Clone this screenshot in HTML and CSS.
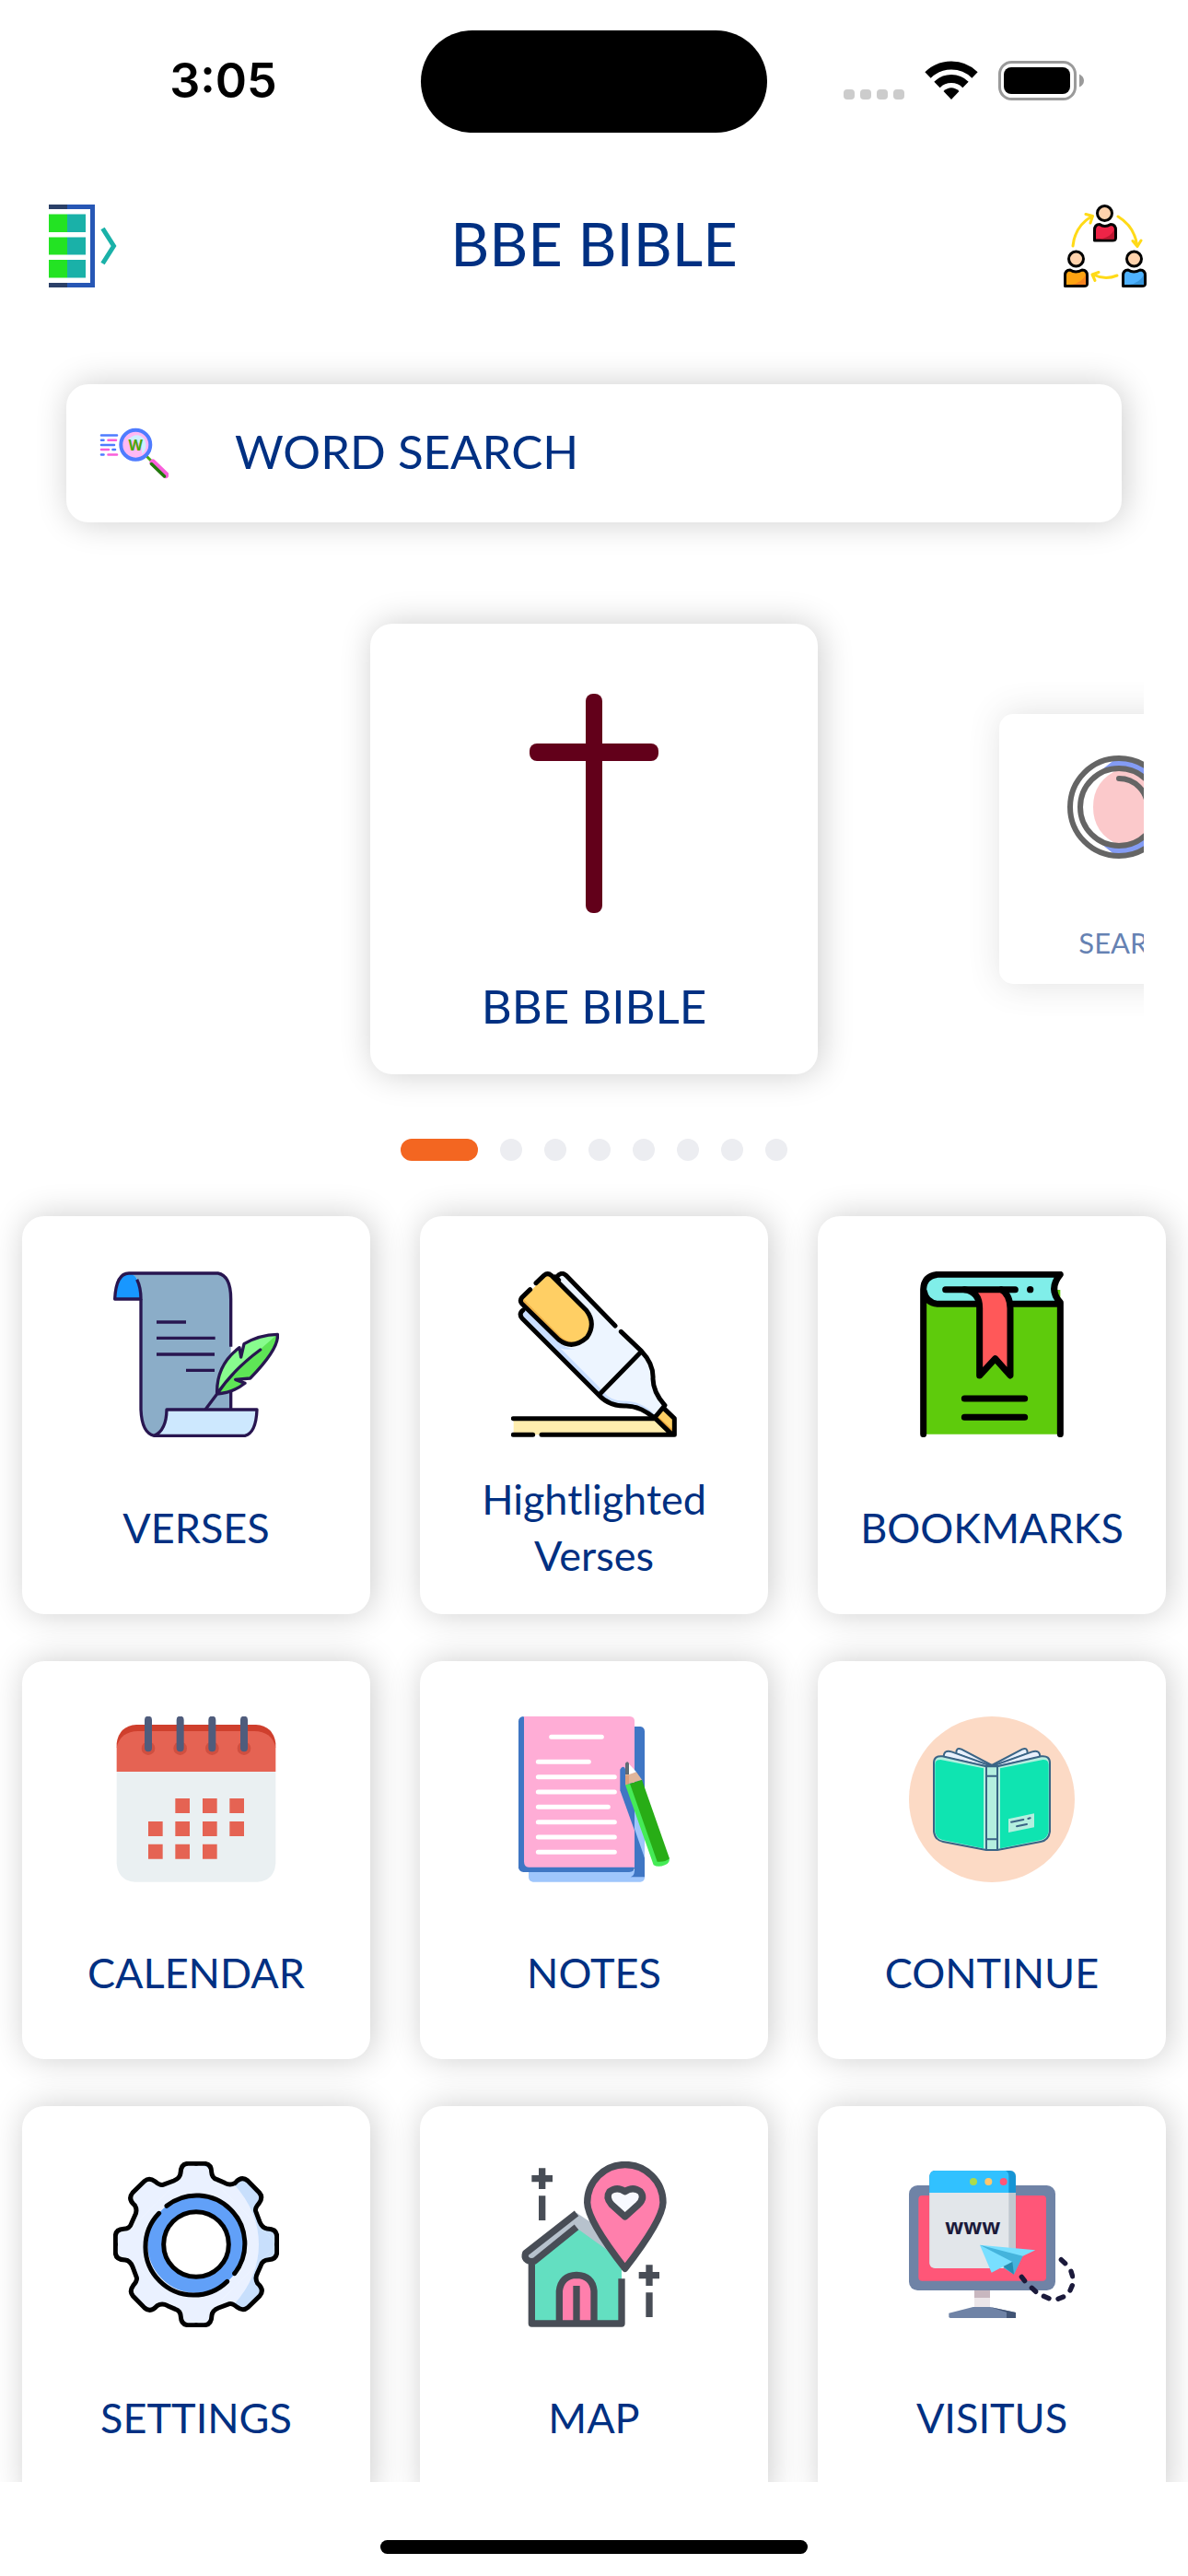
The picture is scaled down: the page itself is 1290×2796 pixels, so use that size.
FILE: index.html
```html
<!DOCTYPE html>
<html lang="en">
<head>
<meta charset="utf-8">
<meta name="viewport" content="width=device-width, initial-scale=1">
<title>BBE Bible</title>
<link rel="stylesheet" href="styles.css">
</head>
<body>
<div class="app">
  <div class="status">
    <div class="status-time">3:05</div>
    <div class="island"></div>
    <div class="status-icons">
      <svg width="66" height="42" viewBox="0 0 66 42" aria-hidden="true"><g fill="#ccc"><rect x="0" y="31" width="12" height="11" rx="4"/><rect x="18" y="31" width="12" height="11" rx="4"/><rect x="36" y="31" width="12" height="11" rx="4"/><rect x="54" y="31" width="12" height="11" rx="4"/></g></svg>
      <svg width="58" height="42" viewBox="0 0 58 42" aria-hidden="true"><g fill="none" stroke="#000" stroke-width="9"><path d="M3.500 15.500A36.500 36.500 0 0 1 54.500 15.500"/><path d="M13.500 26A22 22 0 0 1 44.500 26"/></g><path d="M29 42L20.500 33Q29 25.500 37.500 33Z"/></svg>
      <svg width="94" height="43" viewBox="0 0 94 43" aria-hidden="true"><rect x="1.500" y="1.500" width="82" height="40" rx="13" fill="none" stroke="#9a9a9a" stroke-width="3"/><rect x="6" y="7" width="72" height="29" rx="8"/><path d="M88 14.500Q93 17 93 21.500T88 28.500Z" fill="#9a9a9a"/></svg>
    </div>
  </div>

  <header class="header">
    <button class="icon-button" type="button" aria-label="Menu">
      <svg viewBox="45 222 90 90" aria-hidden="true">
        <path d="M53 222H74V227H53ZM53 307H74V312H53Z" fill="#2b4068"/>
        <path d="M73 222H103V312H73V307H98V227H73Z" fill="#2757b5"/>
        <path d="M53 232.500H73V252H53ZM53 257.500H73V276.500H53ZM53 282H73V301.500H53Z" fill="#23e323"/>
        <path d="M73 232.500H93V252H73ZM73 257.500H93V276.500H73ZM73 282H93V301.500H73Z" fill="#1ab1a8"/>
        <path d="M111.500 248L123.500 267L111.500 286" fill="none" stroke="#1ab1a8" stroke-width="5"/>
      </svg>
    </button>
    <h1 class="title">BBE BIBLE</h1>
    <button class="icon-button" type="button" aria-label="Share">
      <svg viewBox="1155 222 90 90" aria-hidden="true">
        <g fill="none" stroke="#ffda17" stroke-width="3" stroke-linecap="round" stroke-linejoin="round">
          <path d="M1165 267Q1167 246 1185 235M1179 232.500L1186.500 234.500L1184 242"/>
          <path d="M1214 235Q1232 246 1234.500 266M1230 261.500L1235 267.500L1239 261"/>
          <path d="M1213 299Q1200 304.500 1187 298M1193 295.500L1186 298L1189 304.500"/>
        </g>
        <g stroke="#000" stroke-width="3" stroke-linejoin="round">
          <path d="M1188.500 261V250Q1188.500 243.500 1194 243.500Q1199.500 247.500 1206 243.500Q1211.500 243.500 1211.500 250V258Q1211.500 261 1208 261Z" fill="#ee2447"/>
          <path d="M1156.500 310.500V299Q1156.500 293 1162 293Q1168 297 1175 293Q1180.500 293 1180.500 299V308Q1180.500 310.500 1177 310.500Z" fill="#ffa412"/>
          <path d="M1219.500 310.500V299Q1219.500 293 1225 293Q1231 297 1238 293Q1243.500 293 1243.500 299V308Q1243.500 310.500 1240 310.500Z" fill="#4fb2ff"/>
          <circle cx="1199.500" cy="231.500" r="8" fill="#ffd3ad"/><circle cx="1168.500" cy="281" r="8" fill="#ffd3ad"/><circle cx="1231.500" cy="281" r="8" fill="#ffd3ad"/>
        </g>
        <path d="M1210 249V259.500H1194Q1206 258 1210 249Z" fill="#ba1730"/><path d="M1179 298V309H1163Q1175 307 1179 298Z" fill="#f58320"/><path d="M1242 298V309H1226Q1238 307 1242 298Z" fill="#3795db"/>
      </svg>
    </button>
  </header>

  <main class="content">
    <a class="search card" href="#search">
      <svg class="search-icon" viewBox="109 455 75 75" aria-hidden="true">
        <g fill="none" stroke-width="2.600" stroke-linecap="round">
          <path d="M111 472.500H128M111 477.700H113.500M111 483H125M123.500 488H126M111 493.500H113.500" stroke="#4f7cff"/>
          <path d="M118.500 477.700H127M111 488H119M118.500 493.500H128" stroke="#f95fdb"/>
        </g>
        <path d="M160 495L167 502" stroke="#48a60c" stroke-width="3"/>
        <path d="M167 502L181 515.500" stroke="#f95fdb" stroke-width="7" stroke-linecap="round"/>
        <path d="M165.500 503.500L179.500 517" stroke="#217a0b" stroke-width="3.500" stroke-linecap="round"/>
        <circle cx="148.300" cy="482.700" r="16" fill="#ffb9f4" stroke="#4f7cff" stroke-width="4"/>
        <path d="M139 478Q150 467 158 477Q162 487 155 493Q157 477 139 478Z" fill="#cdf0ff"/>
        <text class="glyph" x="148.300" y="489" font-size="16" fill="#48a60c">W</text>
      </svg>
      <span class="search-label">WORD SEARCH</span>
    </a>

    <section class="carousel" aria-label="Featured">
      <a class="slide card" href="#bible">
        <svg class="slide-icon" viewBox="525 753 240 240" aria-hidden="true"><g fill="#62001a"><rect x="636" y="753" width="18" height="238" rx="8"/><rect x="575" y="807" width="140" height="19" rx="8"/></g></svg>
        <span>BBE BIBLE</span>
      </a>
      <a class="slide slide-next card" href="#find">
        <svg class="slide-icon" viewBox="1159 820 144 144" aria-hidden="true">
          <path d="M1215 822A54 54 0 0 1 1215 930Q1180 910 1180 876T1215 822Z" fill="#335cf0"/>
          <circle cx="1215" cy="876" r="44" fill="#fff"/>
          <path d="M1215 835A41 41 0 0 1 1215 917Q1187 905 1187 876T1215 835Z" fill="#f9a6a9"/>
          <g fill="none" stroke="#000" stroke-width="6" stroke-linecap="round"><circle cx="1215" cy="876" r="53"/><circle cx="1215" cy="876" r="42"/><path d="M1215 845A31 31 0 0 1 1246 876M1253 914L1295 956" /></g>
        </svg>
        <span>SEARCH</span>
      </a>
    </section>
    <div class="dots" aria-hidden="true"><i class="dot dot-on"></i><i class="dot"></i><i class="dot"></i><i class="dot"></i><i class="dot"></i><i class="dot"></i><i class="dot"></i><i class="dot"></i></div>

    <nav class="grid" aria-label="Sections">
      <a class="tile card" href="#verses">
        <svg class="tile-icon" viewBox="99 90 540 540" aria-hidden="true">
          <path d="M148 96H440Q482 102 482 180V540H274Q270 610 232 624Q189 610 189 540V180Q189 100 148 96Z" fill="#8badc8"/>
          <path d="M104 180Q108 96 150 96Q172 100 180 122L189 180Z" fill="#1897ff"/>
          <path d="M274 540H567Q564 610 530 624H245Q270 600 274 540Z" fill="#cde8fe"/>
          <g fill="none" stroke="#281650" stroke-width="10" stroke-linejoin="round">
            <path d="M176 116Q189 142 189 180H104Q108 96 150 96H440Q482 104 482 180V335M482 478V540"/>
            <path d="M189 180V540Q192 616 232 625H528Q564 616 567 540H273Q272 608 232 625"/>
            <path d="M240 255H336M240 307H431M240 360H429M336 412H429"/>
          </g>
          <path d="M437 489Q434 395 510 338L515 369L525 326Q575 296 634 295Q640 340 545 438L497 442L528 454Q490 485 437 489Z" fill="#5ee556"/>
          <path d="M437 489Q434 395 510 338L515 369L525 326Q575 296 634 295Q510 400 437 489Z" fill="#88fc8e"/>
          <path d="M437 489Q434 395 510 338L515 369L525 326Q575 296 634 295Q640 340 545 438L497 442L528 454Q490 485 437 489ZM578 345Q490 410 437 489L401 537" fill="none" stroke="#281650" stroke-width="10" stroke-linejoin="round" stroke-linecap="round"/>
        </svg>
        <span class="tile-label">VERSES</span>
      </a>
      <a class="tile card" href="#highlighted">
        <svg class="tile-icon" viewBox="105 90 540 540" aria-hidden="true">
          <path d="M113 569H575L630 622H113Z" fill="#ffedae"/>
          <path d="M135 225L150 210L250 112L268 98L530 350Q572 395 568 440Q570 485 608 528L572 568Q520 525 470 528Q420 528 390 492Z" fill="#edf5ff"/>
          <path d="M135 225L150 210L265 325Q300 350 330 338Q290 350 265 340L405 480Q430 515 480 512Q535 515 575 558L572 568Q520 525 470 528Q420 528 390 492Z" fill="#c9deff"/>
          <path d="M137 185L224 98L350 220Q385 265 352 310Q305 350 260 310Z" fill="#ffcf64"/>
          <path d="M137 185L145 180L270 305Q300 325 335 320Q295 342 260 310Z" fill="#efb048"/>
          <path d="M575 568L605 538L637 568V622Z" fill="#ffcf64"/><path d="M575 568L582 561L637 610V622Z" fill="#efa83c"/>
          <g fill="none" stroke="#000" stroke-width="15" stroke-linecap="round" stroke-linejoin="round">
            <path d="M186 128L212 103Q224 93 236 103L350 217Q383 260 352 305Q305 347 260 312L140 195Q132 185 140 175L167 149"/>
            <path d="M252 110Q268 88 284 103L444 267M463 286L530 350Q570 392 567 440Q568 485 606 526L572 567Q524 528 480 528Q425 530 390 492L141 243Q129 228 144 216M527 353L395 488M248 108L260 118"/>
            <path d="M112 569H575L630 622H204M112 622H176M605 538L637 569V622H630"/>
          </g>
        </svg>
        <span class="tile-label">Hightlighted Verses</span>
      </a>
      <a class="tile card" href="#bookmarks">
        <svg class="tile-icon" viewBox="111 90 540 540" aria-hidden="true">
          <path d="M158 150H604V620H158Z" fill="#5ecb0c"/>
          <path d="M205 100H604Q566 150 604 196H205Q158 190 158 148T205 100Z" fill="#80eee9"/>
          <path d="M320 150H395Q440 160 441 210V428L392 374L341 428V210Q341 160 320 150Z" fill="#ff5859"/>
          <g fill="none" stroke="#000" stroke-width="21" stroke-linecap="round" stroke-linejoin="round">
            <path d="M158 620V148Q160 104 205 100H604Q564 148 604 191V620M160 155Q166 192 205 196H335M445 196H600M230 149H457"/>
            <path d="M292 149Q341 155 341 210V429L392 374L441 429V210Q440 165 412 149"/>
            <path d="M292 504H488M292 565H488"/>
          </g><circle cx="506" cy="149" r="11"/>
        </svg>
        <span class="tile-label">BOOKMARKS</span>
      </a>
      <a class="tile card" href="#calendar">
        <svg class="tile-icon" viewBox="99 99 540 540" aria-hidden="true">
          <path d="M110 279H628V578Q624 634 568 638H170Q114 634 110 578Z" fill="#eaf0f2"/>
          <path d="M110 200V186Q118 130 174 126H564Q620 130 628 186V200Z" fill="#cf3f2d"/>
          <path d="M110 279V200Q122 148 180 147H558Q616 148 628 200V279Z" fill="#e56353"/>
          <g fill="#d04f40"><circle cx="213" cy="203" r="22"/><circle cx="317" cy="203" r="22"/><circle cx="421" cy="203" r="22"/><circle cx="525" cy="203" r="22"/></g>
          <path d="M213 110V202M317 110V202M421 110V202M525 110V202" stroke="#4f5c7c" stroke-width="24" stroke-linecap="round"/>
          <path d="M301 390H348M390 390H437M478 390H525M213 465H260M301 465H348M390 465H437M478 465H525M213 539H260M301 539H348M390 539H437" stroke="#e56353" stroke-width="48"/>
        </svg>
        <span class="tile-label">CALENDAR</span>
      </a>
      <a class="tile card" href="#notes">
        <svg class="tile-icon" viewBox="105 99 540 540" aria-hidden="true">
          <path d="M162 600H507V400L540 560V625Q538 638 526 638H176Q162 636 162 622Z" fill="#9fc6fc"/>
          <path d="M507 132H526Q540 134 540 148V400H507Z" fill="#3f76c4"/>
          <path d="M507 400H540V560L507 470Z" fill="#9fc6fc"/>
          <path d="M507 465L540 560V622H494Q507 618 507 600Z" fill="#3f76c4"/>
          <path d="M145 99Q129 101 129 115V592Q131 604 145 606H490Q507 604 507 590Z" fill="#3f76c4"/>
          <path d="M147 99H492Q507 101 507 114V590H162Q147 588 147 572Z" fill="#ffadd6"/>
          <path d="M460 272Q467 258 475 266L507 330V470L460 340Z" fill="#3f76c4"/>
          <path d="M236 166H400M193 247H358M193 296H442M193 345H442M193 394H421M193 443H442M193 492H442M193 541H442" stroke="#fff" stroke-width="15" stroke-linecap="round"/>
          <path d="M477 322L495 317L585 570L620 560Q624 575 606 583Q584 592 569 583Z" fill="#45eb56"/>
          <path d="M492 318L531 305L621 562Q605 575 581 572Z" fill="#28ad16"/>
          <path d="M477 288L513 280L531 305L477 322Z" fill="#e0b69b"/><path d="M477 290H489V318L477 322Z" fill="#db9f7c"/>
          <path d="M484 248L513 280L489 288Z" fill="#fff"/><path d="M477 288V252Q484 242 489 252V288Z" fill="#5f6b75"/>
        </svg>
        <span class="tile-label">NOTES</span>
      </a>
      <a class="tile card" href="#continue">
        <svg class="tile-icon" viewBox="111 99 540 540" aria-hidden="true">
          <circle cx="381" cy="369" r="270" fill="#fcdac5"/>
          <g stroke="#3a6485" stroke-width="6" stroke-linejoin="round">
            <g fill="#e8f0fc"><path d="M381 258L282 206Q264 198 265 220L372 260ZM381 258L480 206Q498 198 497 220L390 260Z"/><path d="M372 258L250 214Q224 206 224 232L362 262ZM390 258L512 214Q538 206 538 232L400 262Z"/></g>
            <path d="M363 262L220 229Q192 226 192 250V474Q196 502 222 507L363 534H399L540 507Q566 502 570 474V250Q570 226 542 229L399 262Z" fill="#b4efdf"/>
          </g>
          <path d="M354 268L214 240Q196 240 196 256V474Q200 497 222 502L354 529ZM408 268L548 240Q566 240 566 256V474Q562 497 540 502L408 529Z" fill="#0fe4b1"/>
          <path d="M363 260V534M399 260V534M363 293H399M363 499H399M366 258H396" stroke="#3a6485" stroke-width="6"/>
          <path d="M435 433L519 415V460L435 477Z" fill="#b4efdf"/>
          <path d="M444 443L484 435M499 432L506 430M462 457L495 450" stroke="#3a6485" stroke-width="6" stroke-linecap="round"/>
        </svg>
        <span class="tile-label">CONTINUE</span>
      </a>
      <a class="tile card" href="#settings">
        <svg class="tile-icon" viewBox="99 78 540 540" aria-hidden="true">
          <defs>
            <path id="tooth" d="M369 85H397Q418 87 419 112Q420 132 437 137L462 148Q480 158 496 148Q517 124 537 141L575 180Q588 195 574 214Q560 230 563 240L576 275Q584 295 600 297Q632 298 632 322V348"/>
            <clipPath id="shade"><path d="M380 78H650V618H380Q450 590 490 546Q573 456 573 348Q573 240 490 150Q450 105 380 90Z"/></clipPath>
            <g id="gear"><use href="#tooth"/><use href="#tooth" transform="rotate(90 369 348)"/><use href="#tooth" transform="rotate(180 369 348)"/><use href="#tooth" transform="rotate(270 369 348)"/><circle cx="369" cy="348" r="187"/><path d="M369 85L632 348L369 611L106 348Z"/></g>
          </defs>
          <use href="#gear" fill="#eaf1ff"/><g clip-path="url(#shade)"><use href="#gear" fill="#c8dffc"/></g>
          <g fill="none" stroke="#000" stroke-width="15" stroke-linecap="round"><use href="#tooth"/><use href="#tooth" transform="rotate(90 369 348)"/><use href="#tooth" transform="rotate(180 369 348)"/><use href="#tooth" transform="rotate(270 369 348)"/></g>
          <circle cx="369" cy="348" r="132" fill="none" stroke="#61a0f8" stroke-width="52"/>
          <circle cx="369" cy="348" r="106" fill="#fff" stroke="#000" stroke-width="15"/>
          <path d="M273 223A157 157 0 0 1 494 443M470 469A157 157 0 0 1 248 247" fill="none" stroke="#000" stroke-width="15" stroke-linecap="round"/>
        </svg>
        <span class="tile-label">SETTINGS</span>
      </a>
      <a class="tile card" href="#map">
        <svg class="tile-icon" viewBox="105 78 540 540" aria-hidden="true">
          <path d="M172 400L318 290L425 370L465 430V606H172Z" fill="#63dfc1"/>
          <path d="M150 385L318 245L400 300L430 375L322 298L180 405Z" fill="#b7c2cd"/>
          <path d="M262 606V500Q268 450 318 448Q370 450 375 500V606Z" fill="#ff7fac"/>
          <g fill="none" stroke="#484d56" stroke-width="22" stroke-linejoin="round">
            <path d="M318 247L152 377Q148 388 154 396Q166 408 182 402L318 292M172 405V606H465V460M262 606V500Q268 450 318 448Q370 450 375 500V606M318 483V606"/>
            <path d="M476 427Q354 270 353 212A123 123 0 0 1 600 212Q598 270 476 427Z" fill="#ff7fac"/>
            <path d="M476 258L432 218Q412 196 426 176Q450 158 476 176Q502 158 526 176Q542 196 520 218Z" fill="#f8f9ff"/>
            <path d="M206 100V168M172 134H240M206 190V270M555 415V483M521 449H588M555 505V585"/>
          </g>
        </svg>
        <span class="tile-label">MAP</span>
      </a>
      <a class="tile card" href="#visitus">
        <svg class="tile-icon" viewBox="111 78 540 540" aria-hidden="true">
          <rect x="111" y="156" width="477" height="342" rx="28" fill="#6f83a6"/><rect x="142" y="189" width="416" height="278" rx="12" fill="#ff5678"/>
          <path d="M324 498H375V555H324Z" fill="#ece6e9"/><path d="M324 498H375V522H324Z" fill="#c8b7bf"/>
          <path d="M241 584V572L320 552H375L459 570V584Q459 588 452 588H248Q241 588 241 584Z" fill="#6f83a6"/><path d="M375 552L459 570V588H429V569Z" fill="#415475"/>
          <rect x="178" y="108" width="281" height="318" rx="18" fill="#c0c8d0"/><path d="M178 180H436V426H196Q178 424 178 408Z" fill="#e2e6ea"/>
          <path d="M178 180V126Q180 110 196 108H441Q457 110 459 126V180Z" fill="#1695d5"/><path d="M178 180V126Q180 110 196 108H425Q436 112 436 126V180Z" fill="#31c1ff"/>
          <circle cx="321" cy="144" r="12" fill="#abdb4c"/><circle cx="370" cy="144" r="12" fill="#ffc76d"/><circle cx="419" cy="144" r="12" fill="#ff5678"/>
          <text class="glyph" x="319" y="315" font-size="70" fill="#1b1a3b">www</text>
          <path d="M342 350L523 367L482 386L448 405L380 440Z" fill="#78dfff"/><path d="M342 350L482 386L453 446L418 424L448 405Z" fill="#44b4dc"/><path d="M418 420L448 405L453 446Z" fill="#248db2"/>
          <path d="M478 454L488 467M511 490L524 502M550 517L567 524M597 526L614 519M636 498L643 482M644 452L639 436M620 410L607 398" stroke="#1b1a3b" stroke-width="16" stroke-linecap="round"/>
        </svg>
        <span class="tile-label">VISITUS</span>
      </a>
    </nav>
  </main>
  <footer class="home"><div class="home-bar"></div></footer>
</div>
</body>
</html>
```
FILE: styles.css
```css
* { box-sizing: border-box; }

body {
  margin: 0;
  background: #fff;
  color: #003082;
  font-family: Lato, "Open Sans", sans-serif;
}

a { color: inherit; text-decoration: none; }

.app {
  display: flex;
  flex-direction: column;
  height: 100vh;
}

.status {
  display: grid;
  grid-template-columns: 1fr auto 1fr;
  height: 177px;
  flex: none;
  padding-top: 33px;
  align-items: start;
}
.status-time {
  color: #000;
  font: 600 52px/110px Inter, sans-serif;
  text-align: center;
  padding-left: 28px;
}
.island {
  width: 376px;
  height: 111px;
  border-radius: 56px;
  background: #000;
}
.status-icons {
  display: flex;
  align-items: center;
  gap: 22px;
  padding-left: 83px;
  height: 108px;
}

.header {
  display: flex;
  align-items: center;
  justify-content: space-between;
  flex: none;
  height: 180px;
  padding: 0 45px;
}
.title {
  margin: 0;
  padding-bottom: 6px;
  font-size: 65px;
  font-weight: 400;
  line-height: 84px;
}
.icon-button {
  width: 90px;
  height: 90px;
  padding: 0;
  border: 0;
  background: none;
}
.icon-button svg { display: block; width: 100%; }

.content {
  flex: 1;
  min-height: 0;
  overflow: hidden;
  padding-top: 60px;
}

.card {
  background: #fff;
  border-radius: 24px;
  box-shadow: 3px 0 36px rgba(0, 0, 0, .2);
}

.search {
  display: flex;
  align-items: center;
  gap: 72px;
  height: 150px;
  margin: 0 72px;
  padding: 0 36px;
  font-size: 51px;
}
.search-icon { width: 75px; height: 75px; }
.search-label { padding-bottom: 6px; }

.carousel {
  display: flex;
  align-items: center;
  gap: 197px;
  margin: 60px 48px 0;
  padding: 50px 0 50px calc(50% - 291px);
  overflow: hidden;
}
.slide {
  display: flex;
  flex: none;
  flex-direction: column;
  align-items: center;
  gap: 64px;
  width: 486px;
  height: 489px;
  padding-top: 76px;
  font-size: 51px;
  line-height: 70px;
}
.slide-icon { flex: none; width: 240px; height: 240px; }
.slide-next {
  gap: 38px;
  width: 292px;
  height: 293px;
  padding-top: 45px;
  border-radius: 15px;
  font-size: 31px;
  line-height: 42px;
  opacity: .6;
}
.slide-next .slide-icon { width: 144px; height: 144px; }

.dots {
  display: flex;
  justify-content: center;
  gap: 24px;
  margin: 20px 0 60px;
}
.dot {
  width: 24px;
  height: 24px;
  border-radius: 12px;
  background: #ecedf1;
}
.dot-on { width: 84px; background: #f36621; }

.grid {
  display: grid;
  grid-template-columns: repeat(3, 1fr);
  gap: 51px 54px;
  padding: 0 24px;
}
.tile {
  display: flex;
  flex-direction: column;
  align-items: center;
  height: 432px;
  padding: 60px 24px 0;
}
.tile-icon { flex: none; width: 180px; height: 180px; }
.tile-label {
  display: flex;
  flex: 1;
  align-items: center;
  padding-top: 4px;
  font-size: 45px;
  line-height: 61px;
  text-align: center;
}

.glyph {
  font-family: "Noto Sans", sans-serif;
  font-weight: 700;
  text-anchor: middle;
}

.home {
  display: flex;
  flex: none;
  justify-content: center;
  align-items: flex-end;
  height: 102px;
  padding-bottom: 24px;
}
.home-bar {
  width: 36%;
  height: 15px;
  border-radius: 8px;
  background: #000;
}
```
